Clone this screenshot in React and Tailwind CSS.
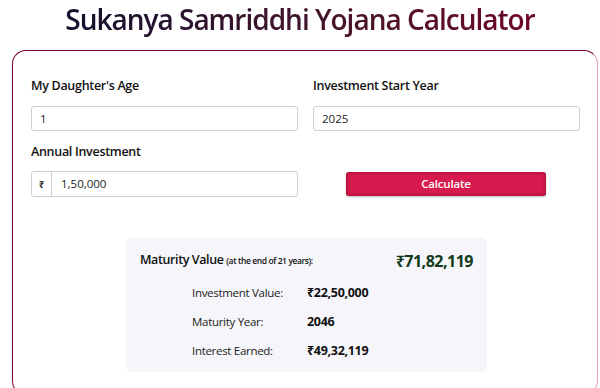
import React from "react";

export default function App() {
  return (
    <div className="w-[600px] h-[388px] overflow-hidden bg-white" style={{ fontFamily: '"Open Sans", "Noto Sans", sans-serif' }}>
      <h1 className="text-center text-[28px] leading-[36px] pt-[1px] font-[550] tracking-[-1px] bg-gradient-to-r from-[#14102e] to-[#6e0525] bg-clip-text text-transparent w-fit mx-auto">
        Sukanya Samriddhi Yojana Calculator
      </h1>
      <div className="ml-[12px] mt-[13px] w-[586px] h-[345px] border border-[#7a0a2e] border-r-[#e2a3b3] rounded-[14px] px-[18px] pt-[26px]">
        <div className="grid grid-cols-2 gap-x-[15px] w-[549px]">
          <div>
            <div className="text-[12.5px] font-semibold text-[#111] tracking-[-0.3px] leading-[18px]">My Daughter's Age</div>
            <div className="mt-[11px] h-[25px] border border-[#cfcfd4] rounded-[3px] flex items-center px-[8px] text-[11.5px] text-[#222]">1</div>
            <div className="mt-[12px] text-[12.5px] font-semibold text-[#111] tracking-[-0.3px] leading-[18px]">Annual Investment</div>
            <div className="mt-[10px] h-[26px] border border-[#cfcfd4] rounded-[3px] flex items-center text-[11.5px] text-[#222]">
              <div className="w-[20px] h-full border-r border-[#cfcfd4] flex items-center justify-center text-[10px] font-bold">₹</div>
              <div className="pl-[9px]">1,50,000</div>
            </div>
          </div>
          <div>
            <div className="text-[12.5px] font-semibold text-[#111] tracking-[-0.3px] leading-[18px]">Investment Start Year</div>
            <div className="mt-[11px] h-[25px] border border-[#cfcfd4] rounded-[3px] flex items-center px-[8px] text-[11.5px] text-[#222]">2025</div>
            <div className="mt-[41px] ml-[33px] w-[200px] h-[24px] rounded-[3px] bg-[#d81b4e] shadow-[inset_0_0_4px_rgba(120,0,30,0.7),0_1px_2px_rgba(0,0,0,0.25)] flex items-center justify-center text-white text-[11.5px] font-semibold tracking-[-0.2px]">
              Calculate
            </div>
          </div>
        </div>
        <div className="mt-[41px] ml-[95px] w-[361px] h-[134px] bg-[#f5f5fa] rounded-[5px] px-[14px] pt-[6px]">
          <div className="flex items-start justify-between">
            <div className="mt-[2px] text-[#111] tracking-[-0.4px]">
              <span className="text-[12.5px] font-semibold">Maturity Value </span>
              <span className="text-[8.5px] font-semibold">(at the end of 21 years):</span>
            </div>
            <div className="text-[#0f3a18] text-[16px] font-bold tracking-[-0.5px] mr-[0px] mt-[5px]">₹71,82,119</div>
          </div>
          <div className="ml-[52px] mt-[10px] flex flex-col gap-[9px]">
            {[
              ["Investment Value:", "₹22,50,000"],
              ["Maturity Year:", "2046"],
              ["Interest Earned:", "₹49,32,119"],
            ].map(([l, v]) => (
              <div key={l} className="flex items-center h-[20px]">
                <div className="w-[115px] text-[11.5px] text-[#222] tracking-[-0.3px]">{l}</div>
                <div className="text-[12.5px] font-bold text-[#111] tracking-[-0.3px]">{v}</div>
              </div>
            ))}
          </div>
        </div>
      </div>
    </div>
  );
}
